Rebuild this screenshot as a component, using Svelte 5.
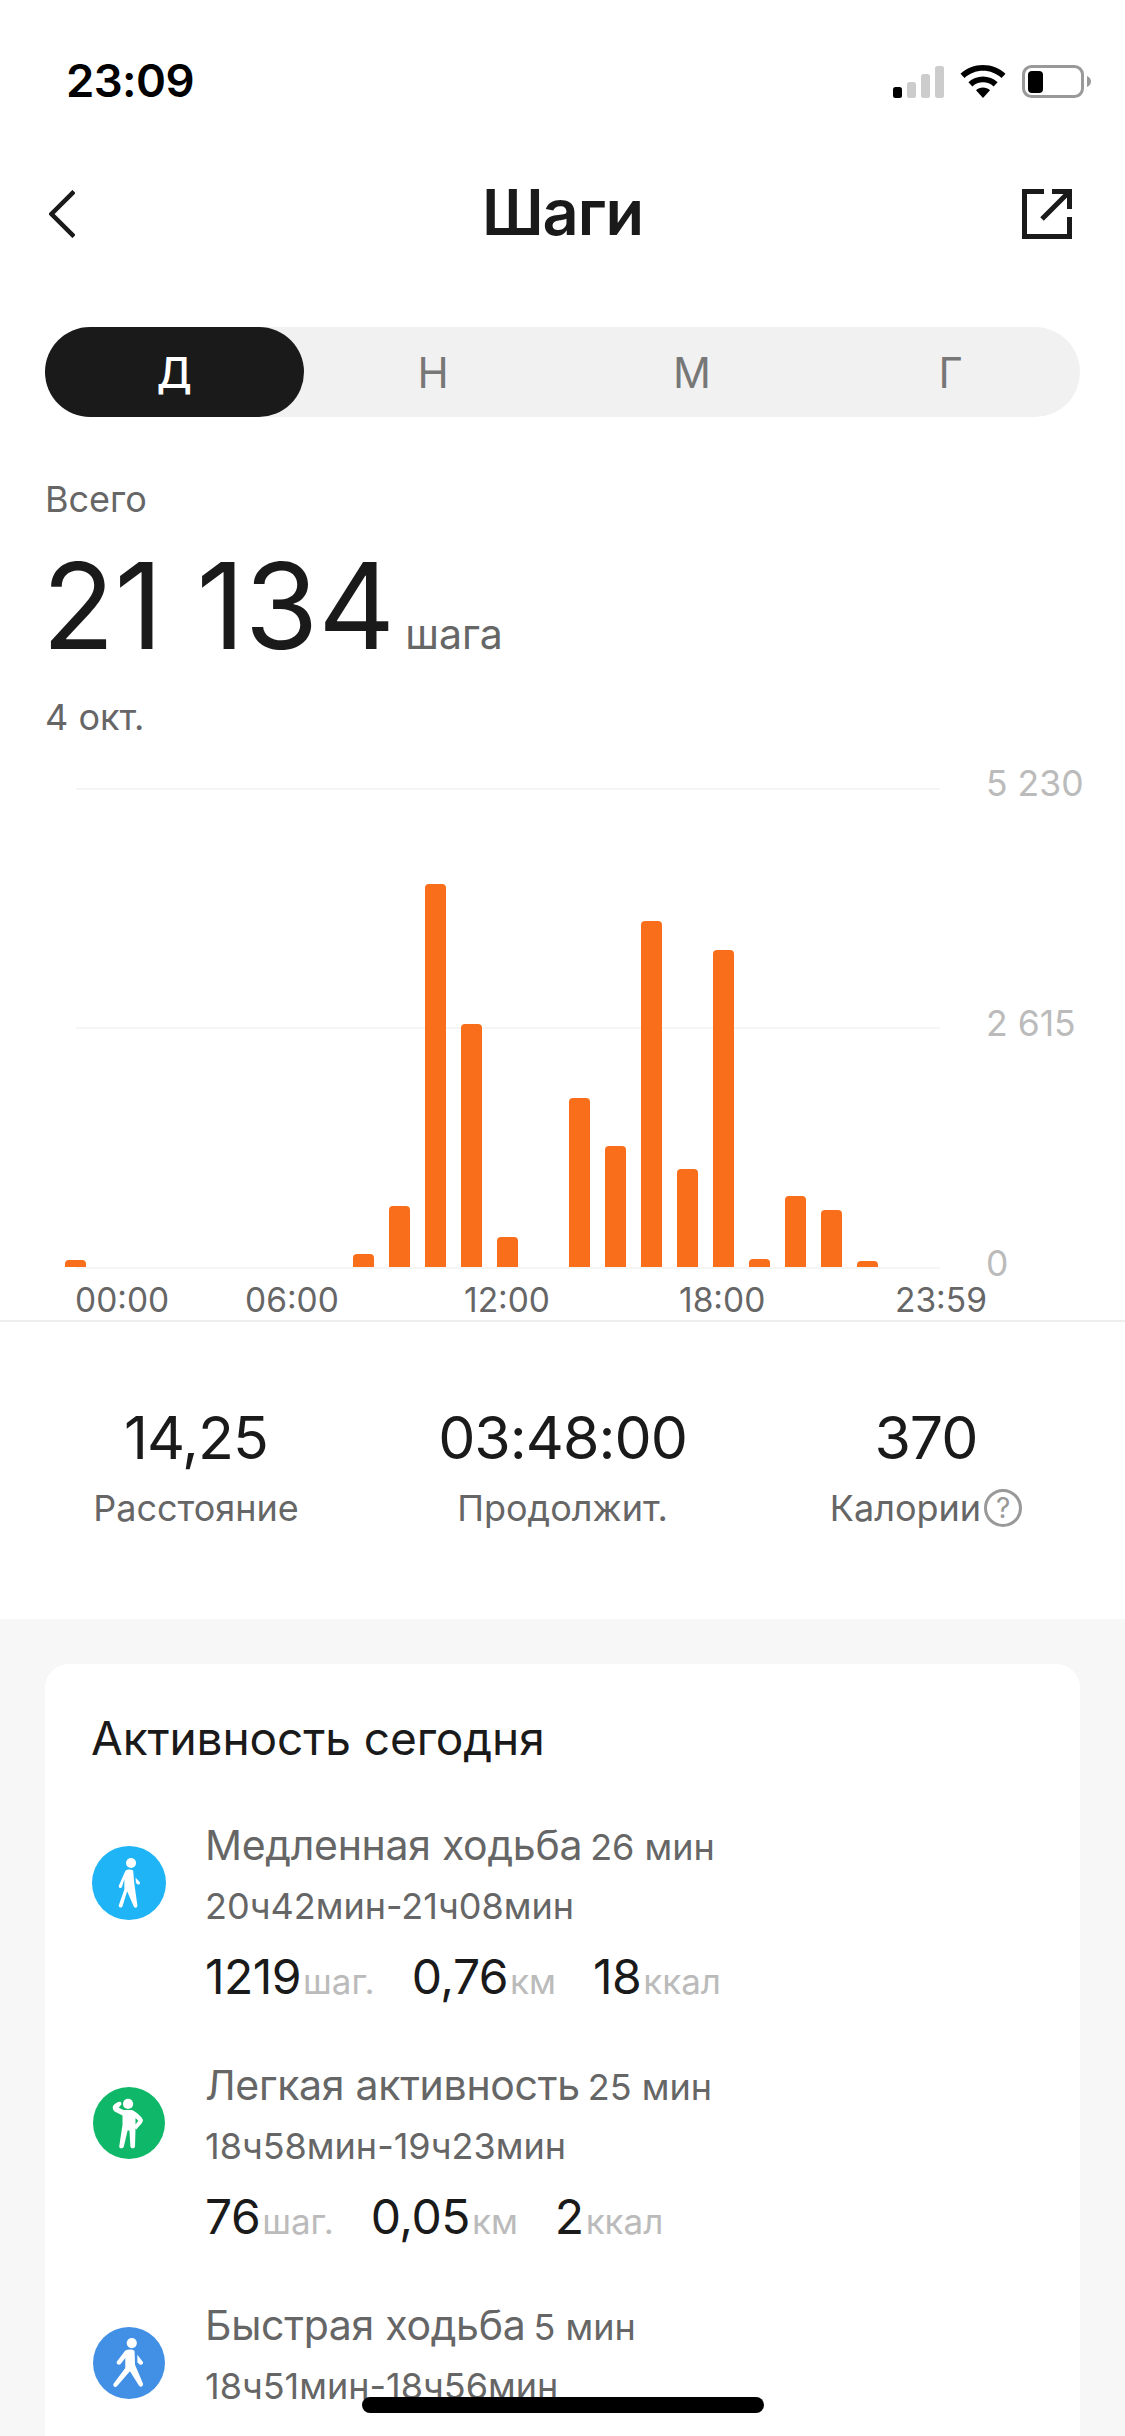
<script>
  const bars = [
    { h: 0, v: 7 }, { h: 8, v: 13 }, { h: 9, v: 61 }, { h: 10, v: 383 }, { h: 11, v: 243 },
    { h: 12, v: 30 }, { h: 14, v: 169 }, { h: 15, v: 121 }, { h: 16, v: 346 }, { h: 17, v: 98 },
    { h: 18, v: 317 }, { h: 19, v: 8 }, { h: 20, v: 71 }, { h: 21, v: 57 }, { h: 22, v: 6 }
  ];
  const slots = Array.from({ length: 24 }, (_, i) => bars.find((b) => b.h === i)?.v ?? 0);
  const tabs = ['Д', 'Н', 'М', 'Г'];
  const stats = [
    { value: '14,25', label: 'Расстояние' },
    { value: '03:48:00', label: 'Продолжит.' },
    { value: '370', label: 'Калории', help: true }
  ];
  const rows = [
    { kind: 'slow', color: '#1eb4f5', name: 'Медленная ходьба', dur: '26 мин', time: '20ч42мин-21ч08мин', steps: '1219', km: '0,76', kcal: '18' },
    { kind: 'light', color: '#0fb868', name: 'Легкая активность', dur: '25 мин', time: '18ч58мин-19ч23мин', steps: '76', km: '0,05', kcal: '2' },
    { kind: 'fast', color: '#4290e5', name: 'Быстрая ходьба', dur: '5 мин', time: '18ч51мин-18ч56мин', steps: '648', km: '0,40', kcal: '11' }
  ];
</script>

<div class="page">
  <div class="status">
    <span class="clock">23:09</span>
    <div class="status-icons">
      <svg width="51" height="32" viewBox="0 0 51 32">
        <rect x="0" y="21" width="9" height="11" rx="2.5" fill="#000" />
        <rect x="14" y="16" width="9" height="16" rx="2.5" fill="#ccc" />
        <rect x="28" y="8" width="9" height="24" rx="2.5" fill="#ccc" />
        <rect x="42" y="0" width="9" height="32" rx="2.5" fill="#ccc" />
      </svg>
      <svg width="46" height="33" viewBox="0 0 46 33">
        <path d="M23 0C14.500 0 6.500 3.200 0.500 8.800L4.500 13C9.500 8.400 16 5.800 23 5.800S36.500 8.400 41.500 13L45.500 8.800C39.500 3.200 31.500 0 23 0Z" fill="#000" />
        <path d="M23 11.500C17.500 11.500 12.300 13.600 8.400 17.200L12.400 21.400C15.300 18.800 19 17.300 23 17.300S30.700 18.800 33.600 21.400L37.600 17.200C33.700 13.600 28.500 11.500 23 11.500Z" fill="#000" />
        <path d="M23 22.500C20.300 22.500 17.900 23.500 16 25.200L23 33L30 25.200C28.100 23.500 25.700 22.500 23 22.500Z" fill="#000" />
      </svg>
      <svg width="69" height="33" viewBox="0 0 69 33">
        <rect x="1.500" y="1.500" width="59" height="30" rx="8" fill="none" stroke="#999" stroke-width="3" />
        <rect x="6" y="6" width="15" height="22" rx="4" fill="#000" />
        <path d="M65 11C67.500 12 69 14 69 16.500S67.500 21 65 22Z" fill="#999" />
      </svg>
    </div>
  </div>

  <header class="nav">
    <svg class="back" width="26" height="48" viewBox="0 0 26 48">
      <path d="M25 1.500L2.500 24L25 46.500" fill="none" stroke="#1a1a1a" stroke-width="4.500" />
    </svg>
    <h1>Шаги</h1>
    <svg class="share" width="50" height="50" viewBox="0 0 50 50">
      <path d="M22 2.500H2.500V47.500H47.500V28" fill="none" stroke="#1a1a1a" stroke-width="5" />
      <path d="M20 30L46 4M30 2.500H47.500V20" fill="none" stroke="#1a1a1a" stroke-width="5" />
    </svg>
  </header>

  <div class="tabs">
    {#each tabs as t, i}
      <div class="tab" class:active={i === 0}>{t}</div>
    {/each}
  </div>

  <section class="summary">
    <div class="muted">Всего</div>
    <div class="total"><span class="big">21 134</span><span class="unit">шага</span></div>
    <div class="muted">4 окт.</div>
  </section>

  <section class="chart">
    <div class="grid g0"></div>
    <div class="grid g1"></div>
    <div class="grid g2"></div>
    <span class="ytick y0">5 230</span>
    <span class="ytick y1">2 615</span>
    <span class="ytick y2">0</span>
    <div class="bars">
      {#each slots as v}
        <div class="slot">
          {#if v}<div class="bar" style="height:{v}px"></div>{/if}
        </div>
      {/each}
    </div>
    <div class="xaxis">
      <span>00:00</span><span>06:00</span><span>12:00</span><span>18:00</span><span>23:59</span>
    </div>
  </section>

  <section class="stats">
    {#each stats as s}
      <div class="stat">
        <div class="stat-value">{s.value}</div>
        <div class="stat-label">
          {s.label}{#if s.help}<span class="help">?</span>{/if}
        </div>
      </div>
    {/each}
  </section>

  <main class="lower">
    <div class="card">
      <h2>Активность сегодня</h2>
      {#each rows as r}
        <div class="row">
          <div class="badge" class:large={r.kind === 'slow'} style="background:{r.color}">
            {#if r.kind === 'slow'}
              <svg width="36" height="56" viewBox="0 0 36 56" fill="#fff">
                <circle cx="20.200" cy="6.500" r="5.400" />
                <path d="M14 15C16 13.500 20 13 22.500 14.500L23.500 27L27 52C27.500 55 24 55.500 23 53L16 37L11 53C10 55.500 6.500 54.500 7 52L13 35V24L10.500 32C9.500 34.500 6.500 33.500 7 31Z" />
                <path d="M25 22L29.500 27C30.500 29 29 30 27.500 29.500L25.500 28Z" />
              </svg>
            {:else if r.kind === 'light'}
              <svg width="36" height="56" viewBox="0 0 36 56" fill="#fff">
                <circle cx="17" cy="7.500" r="5.500" />
                <path d="M0.500 11C0.500 9 4 5.500 8 5C10 5 10.500 8 9 9L7 11.500L12 14H21C24 14.500 33 22 33 25C33 28 28 32 26 35L25 34L24.500 53C24.500 56 19.500 56 19.500 53L18.500 36H16.500L12.500 53C12 56 7 56 7.500 53L11 30V20L3 16C1.500 15 0.500 13 0.500 11ZM25 22.500V29.500L28 25.500Z" fill-rule="evenodd" />
              </svg>
            {:else}
              <svg width="36" height="56" viewBox="0 0 36 56" fill="#fff">
                <circle cx="21" cy="6.500" r="5.500" />
                <path d="M14 14.500C17 13 22 13 24 15L24.500 30L33 50C34 53 30 55 28.500 52L19 37L5 53C3 55 0 52.500 1.500 50L14 33.500V22.500L9 29C7 31 3.500 29 5 26.500Z" />
                <path d="M27 19L33 27C34 29.500 31 30.500 29.500 29.500L27 27.500Z" />
              </svg>
            {/if}
          </div>
          <div class="row-body">
            <div class="row-title"><span class="name">{r.name}</span><span class="dur">{r.dur}</span></div>
            <div class="row-time">{r.time}</div>
            <div class="row-stats">
              <span class="metric"><b>{r.steps}</b><i>шаг.</i></span>
              <span class="metric"><b>{r.km}</b><i>км</i></span>
              <span class="metric"><b>{r.kcal}</b><i>ккал</i></span>
            </div>
          </div>
        </div>
      {/each}
    </div>
  </main>

  <div class="home"></div>
</div>

<style>
  :global(body) { margin: 0; background: #fff; }
  .page {
    position: relative;
    width: 1125px;
    height: 2436px;
    overflow: hidden;
    background: #fff;
    font-family: Inter, "Noto Sans", sans-serif;
    color: #1a1a1a;
  }
  .status {
    height: 164px;
    box-sizing: border-box;
    padding: 57px 34px 0 66px;
    display: flex;
    justify-content: space-between;
    align-items: flex-start;
  }
  .clock { font-size: 45.5px; line-height: 48px; font-weight: 600; color: #000; letter-spacing: -0.6px; }
  .status-icons { display: flex; align-items: flex-end; padding-top: 8px; gap: 16px; }
  .status-icons svg { display: block; }
  .nav {
    height: 100px;
    padding: 0 53px 0 49px;
    display: flex;
    align-items: center;
    justify-content: space-between;
    position: relative;
  }
  .nav h1 {
    position: absolute;
    left: 0;
    right: 0;
    top: -2px;
    margin: 0;
    text-align: center;
    font-size: 63px;
    line-height: 100px;
    font-weight: 600;
    letter-spacing: -1px;
  }
  .tabs {
    margin: 63px 45px 0;
    height: 90px;
    border-radius: 45px;
    background: #f1f1f1;
    display: grid;
    grid-template-columns: repeat(4, 1fr);
  }
  .tab {
    display: flex;
    align-items: center;
    justify-content: center;
    font-size: 42px;
    color: #777;
    border-radius: 45px;
  }
  .tab.active { background: #1a1a1a; color: #fff; font-weight: 500; }
  .summary { padding: 60px 45px 0; }
  .muted { font-size: 36px; line-height: 44px; color: #666; }
  .total { display: flex; align-items: baseline; margin-top: 18px; margin-left: -3px; height: 156px; }
  .big { font-size: 119px; line-height: 134px; letter-spacing: 0; font-weight: 400; color: #1a1a1a; }
  .unit { font-size: 41px; color: #666; margin-left: 10px; }
  .chart { position: relative; height: 602px; margin-top: 4px; }
  .grid { position: absolute; left: 76px; width: 864px; height: 2px; background: #f5f5f5; }
  .g0 { top: 45px; }
  .g1 { top: 284px; }
  .g2 { top: 524px; }
  .ytick { position: absolute; left: 986px; font-size: 35.5px; line-height: 40px; color: #bbb; }
  .y0 { top: 21px; }
  .y1 { top: 261px; }
  .y2 { top: 501px; }
  .bars {
    position: absolute;
    left: 65px;
    top: 124px;
    height: 400px;
    display: flex;
    gap: 15px;
    align-items: flex-end;
  }
  .slot { width: 21px; height: 400px; display: flex; align-items: flex-end; }
  .bar { width: 21px; background: #f96e1a; border-radius: 4px 4px 0 0; }
  .xaxis { position: absolute; left: 0; top: 537px; width: 1125px; height: 40px; font-size: 33.5px; line-height: 40px; color: #666; }
  .xaxis span { position: absolute; }
  .xaxis span:nth-child(1) { left: 75px; }
  .xaxis span:nth-child(2) { left: 245px; }
  .xaxis span:nth-child(3) { left: 464px; }
  .xaxis span:nth-child(4) { left: 679px; }
  .xaxis span:nth-child(5) { left: 895px; }
  .chart::after { content: ''; position: absolute; left: 0; right: 0; top: 577px; height: 2px; background: #eee; }
  .stats { display: grid; grid-template-columns: 392px 341px 386px; height: 288px; box-sizing: border-box; padding-top: 72px; margin-top: -14px; }
  .stat { text-align: center; }
  .stat-value { font-size: 59px; line-height: 70px; color: #1a1a1a; letter-spacing: -1px; }
  .stat-label { font-size: 36px; line-height: 44px; color: #666; margin-top: 13px; display: flex; justify-content: center; align-items: center; gap: 3px; }
  .help {
    width: 32px;
    height: 32px;
    border: 3px solid #999;
    border-radius: 50%;
    font-size: 28px;
    line-height: 32px;
    color: #999;
    text-align: center;
  }
  .lower { background: #f7f7f7; padding: 45px 45px 0; height: 817px; box-sizing: border-box; }
  .card { background: #fff; border-radius: 24px 24px 0 0; padding: 47px 47px 0 46px; height: 900px; box-sizing: border-box; }
  .card h2 { margin: 0 0 55px; font-size: 46px; line-height: 54px; font-weight: 400; letter-spacing: -0.100px; }
  .row { display: flex; align-items: flex-start; height: 240px; position: relative; }
  .badge {
    width: 72px;
    height: 72px;
    border-radius: 50%;
    margin: 27px 40px 0 2px;
    display: flex;
    align-items: center;
    justify-content: center;
    flex: none;
  }
  .badge.large { width: 74px; height: 74px; margin: 26px 39px 0 1px; }
  .badge svg { width: 34px; height: 52px; }
  .row-body { flex: 1; }
  .row-title { display: flex; align-items: baseline; gap: 8px; height: 52px; line-height: 52px; color: #666; margin-top: -1px; }
  .name { font-size: 41px; letter-spacing: -0.300px; }
  .dur { font-size: 36px; }
  .row-time { font-size: 36px; line-height: 44px; color: #666; margin-top: 13px; }
  .row-stats { display: flex; gap: 37px; margin-top: 19px; height: 60px; align-items: baseline; }
  .metric { display: flex; align-items: baseline; }
  .metric b { font-size: 48px; font-weight: 400; color: #1a1a1a; letter-spacing: -0.500px; }
  .metric i { font-size: 35px; font-style: normal; color: #bbb; margin-left: 2px; }
  .home {
    position: absolute;
    left: 362px;
    top: 2397px;
    width: 402px;
    height: 16px;
    border-radius: 8px;
    background: #000;
  }
</style>
